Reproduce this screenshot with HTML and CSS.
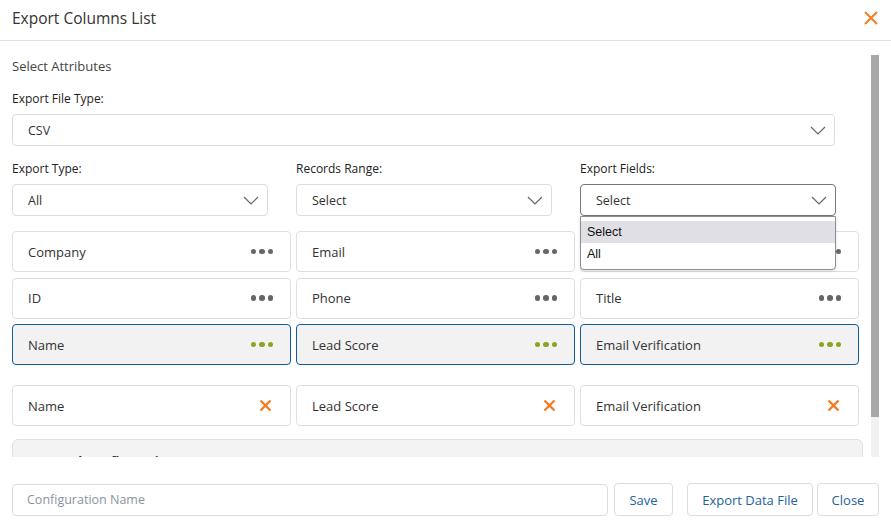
FILE: index.html
```html
<!DOCTYPE html>
<html lang="en">
<head>
  <meta charset="UTF-8" />
  <meta name="viewport" content="width=device-width, initial-scale=1.0" />
  <title>Export Columns List</title>
  <link rel="stylesheet" href="styles.css">
</head>
<body>

  <div class="modal">
    <!-- Header -->
    <div class="modal-head">
      <h1>Export Columns List</h1>
      <button class="close-x" title="Close">
        <svg width="14" height="14" viewBox="0 0 14 14"><path d="M1 1L13 13M13 1L1 13" stroke="#f47c20" stroke-width="2" fill="none"/></svg>
      </button>
    </div>

    <!-- Scrolling body -->
    <div class="modal-body">
      <div class="scroll-content">
        <div class="section-title">Select Attributes</div>

        <div class="field">
          <label>Export File Type:</label>
          <div class="select-box wide">
            <span>CSV</span>
            <svg class="chev" width="16" height="9" viewBox="0 0 16 9"><path d="M1 1l7 7 7-7" stroke="#666" stroke-width="1.2" fill="none"/></svg>
          </div>
        </div>

        <div class="field-row">
          <div class="field">
            <label>Export Type:</label>
            <div class="select-box">
              <span>All</span>
              <svg class="chev" width="16" height="9" viewBox="0 0 16 9"><path d="M1 1l7 7 7-7" stroke="#666" stroke-width="1.2" fill="none"/></svg>
            </div>
          </div>
          <div class="field">
            <label>Records Range:</label>
            <div class="select-box">
              <span>Select</span>
              <svg class="chev" width="16" height="9" viewBox="0 0 16 9"><path d="M1 1l7 7 7-7" stroke="#666" stroke-width="1.2" fill="none"/></svg>
            </div>
          </div>
          <div class="field">
            <label>Export Fields:</label>
            <div class="select-wrap">
              <div class="select-box open">
                <span>Select</span>
                <svg class="chev" width="16" height="9" viewBox="0 0 16 9"><path d="M1 1l7 7 7-7" stroke="#666" stroke-width="1.2" fill="none"/></svg>
              </div>
              <!-- open native list -->
              <ul class="dropdown">
                <li class="active">Select</li>
                <li>All</li>
              </ul>
            </div>
          </div>
        </div>

        <!-- Available columns -->
        <div class="col-grid">
          <div class="col-card"><span>Company</span><i class="dots"><b></b><b></b><b></b></i></div>
          <div class="col-card"><span>Email</span><i class="dots"><b></b><b></b><b></b></i></div>
          <div class="col-card"><span></span><i class="dots"><b></b><b></b><b></b></i></div>
          <div class="col-card"><span>ID</span><i class="dots"><b></b><b></b><b></b></i></div>
          <div class="col-card"><span>Phone</span><i class="dots"><b></b><b></b><b></b></i></div>
          <div class="col-card"><span>Title</span><i class="dots"><b></b><b></b><b></b></i></div>
          <div class="col-card selected"><span>Name</span><i class="dots"><b></b><b></b><b></b></i></div>
          <div class="col-card selected"><span>Lead Score</span><i class="dots"><b></b><b></b><b></b></i></div>
          <div class="col-card selected"><span>Email Verification</span><i class="dots"><b></b><b></b><b></b></i></div>
        </div>

        <!-- Chosen columns -->
        <div class="col-grid chosen">
          <div class="col-card"><span>Name</span><svg class="rm" width="13" height="13" viewBox="0 0 13 13"><path d="M1.5 1.5l10 10M11.5 1.5l-10 10" stroke="#f47c20" stroke-width="2.4" fill="none"/></svg></div>
          <div class="col-card"><span>Lead Score</span><svg class="rm" width="13" height="13" viewBox="0 0 13 13"><path d="M1.5 1.5l10 10M11.5 1.5l-10 10" stroke="#f47c20" stroke-width="2.4" fill="none"/></svg></div>
          <div class="col-card"><span>Email Verification</span><svg class="rm" width="13" height="13" viewBox="0 0 13 13"><path d="M1.5 1.5l10 10M11.5 1.5l-10 10" stroke="#f47c20" stroke-width="2.4" fill="none"/></svg></div>
        </div>

        <div class="saved">
          <span class="plus">+</span> Saved Configuration
        </div>
      </div>

      <!-- scrollbar -->
      <div class="scrollbar"><div class="thumb"></div></div>
    </div>

    <!-- Footer -->
    <div class="modal-foot">
      <input type="text" class="config-name" placeholder="Configuration Name" />
      <button class="btn save">Save</button>
      <button class="btn export">Export Data File</button>
      <button class="btn close">Close</button>
    </div>
  </div>

</body>
</html>
```

FILE: styles.css
```css
body {
  margin: 0;
  background: white;
  font-family: "Open Sans", Arial, sans-serif;
  color: #444;
}

.modal {
  width: 891px;
  height: 529px;
  background: white;
}

/* Header */
.modal-head {
  display: flex;
  align-items: center;
  justify-content: space-between;
  height: 40px;
  padding: 0 12px;
  border-bottom: 1px solid #e2e2e2;
}

.modal-head h1 {
  margin: 0;
  font-size: 15.5px;
  font-weight: 400;
  color: #333;
  margin-top: -4px;
}

.close-x {
  background: none;
  border: none;
  padding: 0;
  margin-right: 1px;
  margin-top: -4px;
  cursor: pointer;
  display: flex;
}

/* Body */
.modal-body {
  display: flex;
  margin-top: 14px;
  height: 402px;
  width: 879px;
}

.scroll-content {
  width: 871px;
  height: 100%;
  overflow: hidden;
  box-sizing: border-box;
  padding: 2px 12px 0 12px;
}

.scrollbar {
  width: 8px;
  height: 100%;
  background: #f1f1f1;
}

.scrollbar .thumb {
  height: 362px;
  background: #a8a8a8;
}

.section-title {
  font-size: 13px;
  line-height: 18px;
  color: #444;
  margin-bottom: 16px;
}

.field label {
  display: block;
  font-size: 12px;
  line-height: 16px;
  color: #222;
  margin-bottom: 7px;
}

.select-box {
  display: flex;
  align-items: center;
  justify-content: space-between;
  box-sizing: border-box;
  height: 32px;
  width: 256px;
  padding: 0 8px 0 15px;
  border: 1px solid #dcdcdc;
  border-radius: 4px;
  font-size: 12.5px;
  color: #333;
}

.select-box.wide {
  width: 823px;
  margin-bottom: 15px;
}

.select-box.open {
  border-color: #767676;
}

.field-row {
  display: grid;
  grid-template-columns: repeat(3, 279px);
  column-gap: 5px;
  margin-bottom: 15px;
}

.select-wrap {
  position: relative;
  width: 256px;
}

.dropdown {
  position: absolute;
  top: 32px;
  left: 0;
  right: 0;
  margin: 0;
  padding: 4px 0 4px 0;
  list-style: none;
  background: white;
  border: 1px solid #8f8f8f;
  border-radius: 0 0 4px 4px;
  box-shadow: 0 1px 3px rgba(0, 0, 0, 0.15);
  z-index: 5;
  font-family: "Liberation Sans", Arial, sans-serif;
  font-size: 12.5px;
  color: #111;
}

.dropdown li {
  height: 22px;
  line-height: 22px;
  padding-left: 6px;
}

.dropdown li.active {
  background: #dfdfe5;
}

/* Column cards */
.col-grid {
  display: grid;
  grid-template-columns: repeat(3, 279px);
  gap: 5px;
  row-gap: 5.5px;
}

.col-grid.chosen {
  margin-top: 20px;
}

.col-card {
  display: flex;
  align-items: center;
  justify-content: space-between;
  box-sizing: border-box;
  height: 41px;
  padding: 0 17px 0 15px;
  border: 1px solid #dfdfdf;
  border-radius: 4px;
  font-size: 13px;
  color: #333;
  background: white;
}

.col-card.selected {
  background: #f2f2f2;
  border-color: #0f5ca4;
}

.dots {
  display: flex;
  gap: 3px;
}

.dots b {
  width: 5.5px;
  height: 5.5px;
  border-radius: 50%;
  background: #666;
}

.col-card.selected .dots b {
  background: #8aa61d;
}

.col-card .rm {
  margin-right: 1px;
}

.saved {
  margin-top: 13px;
  margin-right: -4px;
  height: 58px;
  box-sizing: border-box;
  padding: 12px 20px;
  background: #f3f3f3;
  border: 1px solid #e2e2e2;
  border-radius: 6px;
  font-size: 13px;
  font-weight: 700;
  color: #333;
}

.saved .plus {
  font-weight: 400;
}

/* Footer */
.modal-foot {
  display: flex;
  align-items: center;
  padding: 26px 12px 0 12px;
}

.config-name {
  flex-shrink: 0;
  width: 596px;
  height: 32px;
  box-sizing: border-box;
  border: 1px solid #dcdcdc;
  border-radius: 4px;
  padding: 0 14px;
  font-family: "Open Sans", Arial, sans-serif;
  font-size: 12.5px;
  outline: none;
}

.config-name::placeholder {
  color: #8b93a3;
}

.btn {
  flex-shrink: 0;
  height: 33px;
  box-sizing: border-box;
  background: white;
  border: 1px solid #dcdcdc;
  border-radius: 4px;
  padding: 0;
  font-family: "Open Sans", Arial, sans-serif;
  font-size: 13px;
  color: #1e5f9d;
  cursor: pointer;
}

.btn.save {
  margin-left: 6px;
  width: 59px;
}

.btn.export {
  margin-left: 14px;
  width: 126px;
}

.btn.close {
  margin-left: 4px;
  width: 62px;
}
```
